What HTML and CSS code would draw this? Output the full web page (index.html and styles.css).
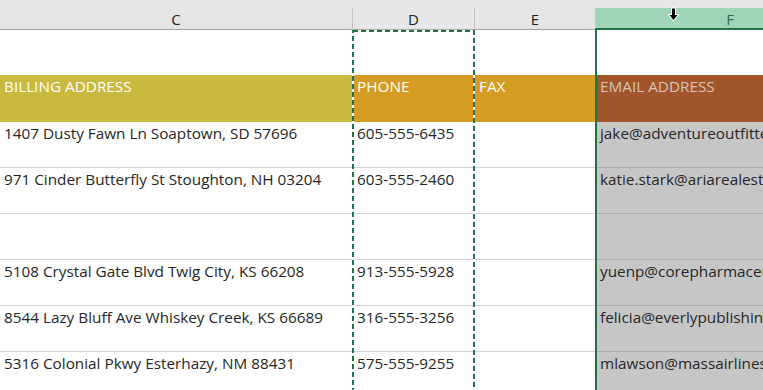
FILE: index.html
```html
<!DOCTYPE html>
<html lang="en">
<head>
    <meta charset="UTF-8">
    <title>Customers</title>
    <link rel="stylesheet" href="styles.css">
</head>
<body>
    <div class="sheet">
        <div class="col-heads">
            <div class="ch">C</div>
            <div class="ch">D</div>
            <div class="ch">E</div>
            <div class="ch ch-sel">F</div>
        </div>

        <div class="rows">
            <!-- row 1: blank, F1 is the active cell -->
            <div class="cell blank"></div>
            <div class="cell blank"></div>
            <div class="cell blank"></div>
            <div class="cell blank"></div>

            <!-- table headers -->
            <div class="cell th th-billing">BILLING ADDRESS</div>
            <div class="cell th th-phone">PHONE</div>
            <div class="cell th th-phone">FAX</div>
            <div class="cell th th-email">EMAIL ADDRESS</div>

            <div class="cell">1407 Dusty Fawn Ln Soaptown, SD 57696</div>
            <div class="cell">605-555-6435</div>
            <div class="cell"></div>
            <div class="cell sel">jake@adventureoutfitters.com</div>

            <div class="cell">971 Cinder Butterfly St Stoughton, NH 03204</div>
            <div class="cell">603-555-2460</div>
            <div class="cell"></div>
            <div class="cell sel">katie.stark@ariarealestate.com</div>

            <div class="cell"></div>
            <div class="cell"></div>
            <div class="cell"></div>
            <div class="cell sel"></div>

            <div class="cell">5108 Crystal Gate Blvd Twig City, KS 66208</div>
            <div class="cell">913-555-5928</div>
            <div class="cell"></div>
            <div class="cell sel">yuenp@corepharmaceuticals.com</div>

            <div class="cell">8544 Lazy Bluff Ave Whiskey Creek, KS 66689</div>
            <div class="cell">316-555-3256</div>
            <div class="cell"></div>
            <div class="cell sel">felicia@everlypublishing.com</div>

            <div class="cell">5316 Colonial Pkwy Esterhazy, NM 88431</div>
            <div class="cell">575-555-9255</div>
            <div class="cell"></div>
            <div class="cell sel">mlawson@massairlines.com</div>
        </div>

        <!-- copy marquee around column D -->
        <svg class="marquee" width="125" height="370" viewBox="0 0 125 370">
            <rect x="1" y="1" width="121" height="400" fill="none" stroke="#ffffff" stroke-width="2"/>
            <rect x="1" y="1" width="121" height="400" fill="none" stroke="#217346" stroke-width="2" stroke-dasharray="5 3"/>
        </svg>

        <!-- selected column F outline -->
        <div class="sel-edge"></div>

        <!-- select-column cursor -->
        <svg class="cursor" width="11" height="16" viewBox="0 0 11 16">
            <path d="M4 1.5 H7 V8 H9.5 L5.5 13 L1.5 8 H4 Z" fill="#000" stroke="#fff" stroke-width="2" stroke-linejoin="miter" paint-order="stroke"/>
        </svg>
    </div>
</body>
</html>
```

FILE: styles.css
```css
body {
    margin: 0;
    background: #fff;
    font-family: "Open Sans", "Noto Sans", sans-serif;
    color: #262626;
    overflow: hidden;
}
.sheet {
    position: relative;
    width: 763px;
    height: 390px;
    overflow: hidden;
}
.col-heads {
    display: grid;
    grid-template-columns: 353px 122px 121px 268px;
    padding-top: 8px;
    background: #e6e6e6;
}
.ch {
    height: 21px;
    line-height: 22px;
    text-align: center;
    font-size: 15px;
    color: #222;
    border-right: 1px solid #c4c4c4;
    border-bottom: 1px solid #a3a3a3;
}
.ch-sel {
    height: 20px;
    background: #9fd5b7;
    color: #217346;
    border-right: none;
    border-bottom: 2px solid #217346;
}
.rows {
    display: grid;
    grid-template-columns: 353px 122px 121px 268px;
    grid-template-rows: 45px 47px repeat(6, 46px);
}
.cell {
    box-sizing: border-box;
    padding: 1px 4px 0 4px;
    font-size: 15.3px;
    line-height: 21px;
    white-space: nowrap;
    overflow: hidden;
    border-bottom: 1px solid #d4d4d4;
    border-right: 1px solid #d4d4d4;
}
.blank {
    border: none;
}
.th {
    padding-top: 1px;
    color: #fff;
    border: none;
}
.th-billing {
    background: #c9b93f;
}
.th-phone {
    background: #d49c22;
}
.th-email {
    background: #a0562a;
    color: #d6c4ba;
}
.sel {
    background: #c6c6c6;
    border-bottom-color: #ababab;
}
.marquee {
    position: absolute;
    left: 352px;
    top: 30px;
}
.sel-edge {
    position: absolute;
    left: 595px;
    top: 28px;
    bottom: 0;
    width: 2px;
    background: #217346;
}
.cursor {
    position: absolute;
    left: 668px;
    top: 7px;
}
```
